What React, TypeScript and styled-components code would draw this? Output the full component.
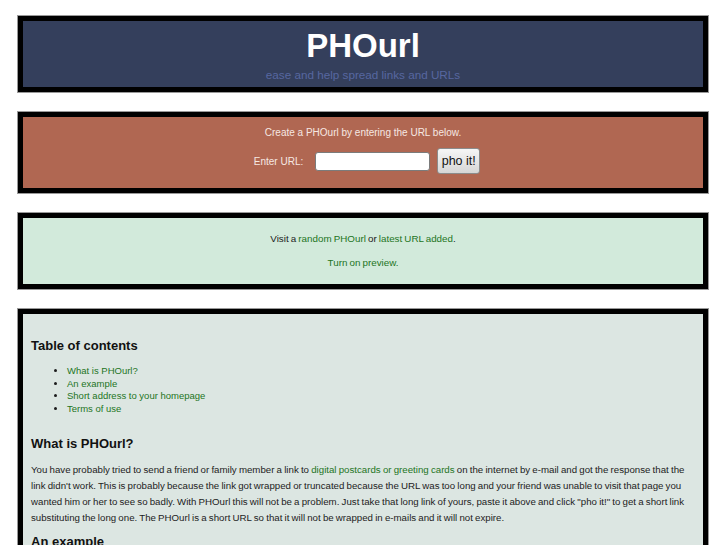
import styled, { createGlobalStyle } from 'styled-components';

const GlobalStyle = createGlobalStyle`
  html, body {
    margin: 0;
    padding: 0;
    background: #fff;
  }
  body {
    font-family: "Liberation Sans", Arial, Helvetica, sans-serif;
    color: #1c1c1c;
  }
`;

const Page = styled.div`
  display: flex;
  flex-direction: column;
  gap: 20px;
  padding: 16px 19px 40px 18px;
`;

const Panel = styled.section<{ $bg: string }>`
  background: ${p => p.$bg};
  border: 5px solid #000;
  box-shadow: 0 0 0 1px rgba(0, 0, 0, 0.4);
`;

const Header = styled(Panel)`
  padding: 7px 0 5px;
  text-align: center;
`;

const Title = styled.h1`
  margin: 0 0 4px;
  font-size: 33px;
  line-height: 36px;
  font-weight: bold;
  color: #fff;
`;

const Tagline = styled.div`
  font-size: 11.7px;
  line-height: 14px;
  color: #5767a0;
`;

const CreateBox = styled(Panel)`
  padding: 9px 0 14px;
  text-align: center;
  color: #f6e8e2;
  font-size: 10px;
`;

const Line = styled.div`
  line-height: 14px;
`;

const FormRow = styled.form`
  margin-top: 8px;
  padding-left: 8px;
  display: flex;
  justify-content: center;
  align-items: center;
  height: 26px;
`;

const Label = styled.label`
  font-size: 10px;
  margin-right: 12px;
`;

const UrlInput = styled.input`
  box-sizing: border-box;
  width: 115px;
  height: 19px;
  border: 1px solid #7b7b7b;
  border-radius: 3px;
  background: #fff;
  padding: 0 3px;
  margin: 0 7px 0 0;
`;

const Button = styled.button`
  box-sizing: border-box;
  width: 43px;
  height: 26px;
  padding: 0;
  border: 1px solid #8c8c8c;
  border-radius: 3px;
  background: linear-gradient(#f6f6f6, #d6d6d6);
  font-family: "Liberation Sans", Arial, sans-serif;
  font-size: 12.5px;
  color: #111;
`;

const VisitBox = styled(Panel)`
  padding: 14px 0;
  text-align: center;
  font-size: 9.8px;
  word-spacing: -0.6px;
  display: flex;
  flex-direction: column;
  gap: 10px;
`;

const Link = styled.a`
  color: #237523;
  text-decoration: none;
`;

const Content = styled(Panel)`
  padding: 24px 8px 0;
  font-size: 10px;
  min-height: 260px;
`;

const Heading = styled.h2<{ $top?: number }>`
  margin: ${p => p.$top ?? 0}px 0 0;
  font-size: 13px;
  line-height: 16px;
  font-weight: bold;
  color: #111;
`;

const Toc = styled.ul`
  margin: 11px 0 0;
  padding-left: 36px;
  font-size: 9.5px;
  line-height: 12.7px;
`;

const Para = styled.p`
  margin: 10px 0 8px;
  font-size: 9.7px;
  word-spacing: -0.5px;
  line-height: 16px;
`;

export default function App() {
  return (
    <>
      <GlobalStyle />
      <Page>
        <Header $bg="#343f5c">
          <Title>PHOurl</Title>
          <Tagline>ease and help spread links and URLs</Tagline>
        </Header>

        <CreateBox $bg="#b06752">
          <Line>Create a PHOurl by entering the URL below.</Line>
          <FormRow onSubmit={e => e.preventDefault()}>
            <Label htmlFor="url">Enter URL:</Label>
            <UrlInput id="url" type="text" />
            <Button type="submit">pho it!</Button>
          </FormRow>
        </CreateBox>

        <VisitBox $bg="#d2eadb">
          <Line>
            Visit a <Link href="#">random PHOurl</Link> or <Link href="#">latest URL added</Link>.
          </Line>
          <Line>
            <Link href="#">Turn on preview.</Link>
          </Line>
        </VisitBox>

        <Content $bg="#dce6e2">
          <Heading>Table of contents</Heading>
          <Toc>
            <li><Link href="#what">What is PHOurl?</Link></li>
            <li><Link href="#example">An example</Link></li>
            <li><Link href="#homepage">Short address to your homepage</Link></li>
            <li><Link href="#terms">Terms of use</Link></li>
          </Toc>
          <Heading $top={20}>What is PHOurl?</Heading>
          <Para>
            You have probably tried to send a friend or family member a link to{' '}
            <Link href="#">digital postcards or greeting cards</Link> on the internet by e-mail and
            got the response that the link didn't work. This is probably because the link got
            wrapped or truncated because the URL was too long and your friend was unable to visit
            that page you wanted him or her to see so badly. With PHOurl this will not be a
            problem. Just take that long link of yours, paste it above and click "pho it!" to get
            a short link substituting the long one. The PHOurl is a short URL so that it will not
            be wrapped in e-mails and it will not expire.
          </Para>
          <Heading>An example</Heading>
        </Content>
      </Page>
    </>
  );
}
